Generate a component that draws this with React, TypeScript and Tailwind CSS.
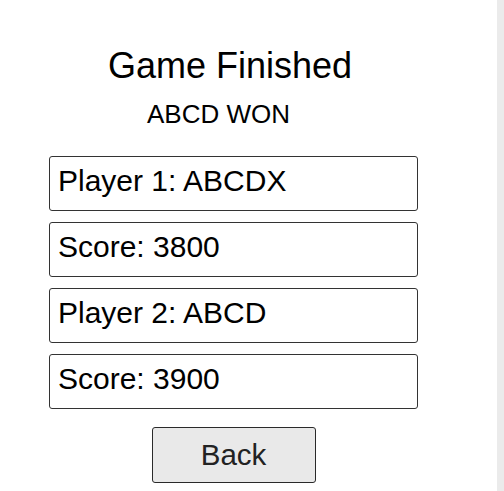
const rows = ['Player 1: ABCDX', 'Score: 3800', 'Player 2: ABCD', 'Score: 3900'];

export default function App() {
    return (
        <div className="flex h-[491px] w-full bg-white font-['Liberation_Sans',Arial,sans-serif] text-black">
            <div className="flex-1 flex flex-col">
                <div className="w-[467px] flex flex-col items-center pt-[45px]">
                    <h1 className="text-[36px] leading-[41px] pr-[7px]">Game Finished</h1>
                    <div className="text-[26px] leading-[30px] mt-[13px] pr-[30px]">ABCD WON</div>

                    <div className="flex flex-col gap-[11px] mt-[27px]">
                        {rows.map((r) => (
                            <div
                                key={r}
                                className="w-[369px] h-[55px] border border-[#333] rounded-[3px] pl-[8px] pt-[7px] text-[30px] leading-[33px]"
                            >
                                {r}
                            </div>
                        ))}
                    </div>

                    <button className="mt-[18px] w-[164px] h-[56px] bg-[#e9e9e9] border border-[#2a2a2a] rounded-[3px] text-[29.5px] text-[#222] flex items-center justify-center">
                        Back
                    </button>
                </div>
            </div>
            <div className="w-[7px] h-full bg-[#ebebeb]" />
        </div>
    );
}
